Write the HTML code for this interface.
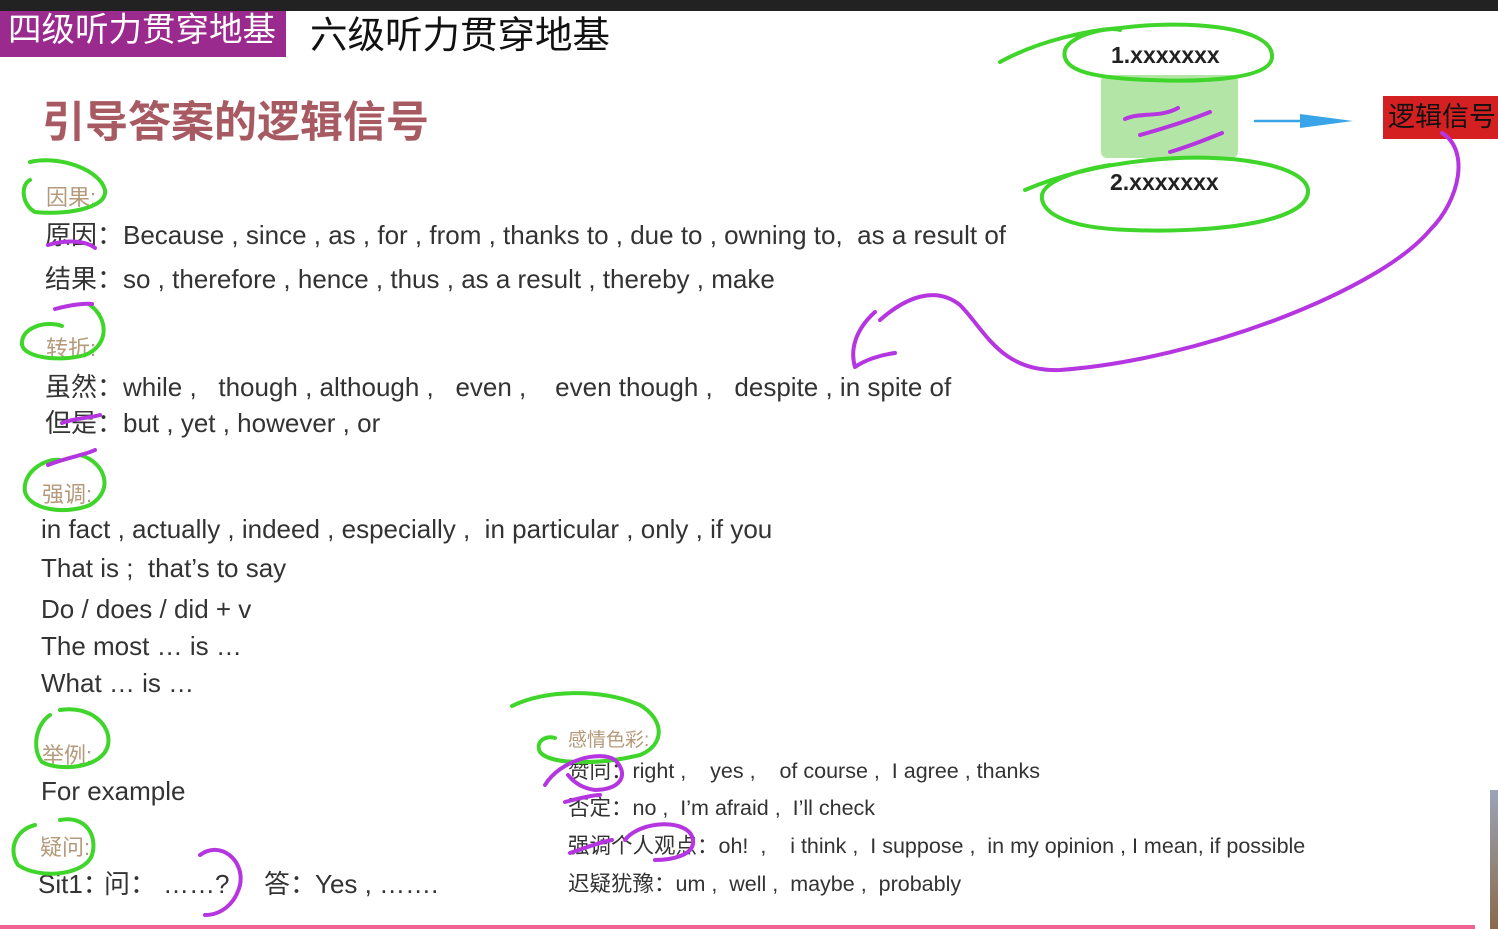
<!DOCTYPE html>
<html><head><meta charset="utf-8"><style>
html,body{margin:0;padding:0;}
body{width:1498px;height:929px;background:#fff;position:relative;overflow:hidden;font-family:"Liberation Sans","Noto Sans CJK SC",sans-serif;color:#333;}
.a{position:absolute;white-space:pre;line-height:1;}
.t{font-size:26px;}
.s{font-size:21.5px;}
.lab{color:#b49a7a;font-size:22px;}
</style></head><body>
<div style="position:absolute;left:0;top:0;width:1498px;height:11px;background:#222;"></div>
<div style="position:absolute;left:0;top:11px;width:286px;height:46px;background:#9a2a8e;"></div>
<div class="a" style="left:8px;top:14px;font-size:33.5px;color:#fff;">四级听力贯穿地基</div>
<div class="a" style="left:310px;top:17px;font-size:37.5px;color:#111;">六级听力贯穿地基</div>
<div class="a" style="left:42px;top:102px;font-size:43px;color:#a85a62;font-weight:bold;">引导答案的逻辑信号</div>

<div style="position:absolute;left:1101px;top:75px;width:137px;height:83px;background:#b3e6a6;border-radius:6px;"></div>
<div class="a" style="left:1111px;top:44px;font-size:23px;font-weight:bold;color:#222;">1.xxxxxxx</div>
<div class="a" style="left:1110px;top:171px;font-size:23px;font-weight:bold;color:#222;">2.xxxxxxx</div>
<div style="position:absolute;left:1383px;top:96px;width:115px;height:43px;background:#d42020;"></div>
<div class="a" style="left:1388px;top:104px;font-size:27px;color:#111;">逻辑信号</div>

<div class="a lab" style="left:46px;top:187px;">因果:</div>
<div class="a t" style="left:45px;top:222px;">原因：Because , since , as , for , from , thanks to , due to , owning to,  as a result of</div>
<div class="a t" style="left:45px;top:266px;">结果：so , therefore , hence , thus , as a result , thereby , make</div>
<div class="a lab" style="left:46px;top:338px;">转折:</div>
<div class="a t" style="left:45px;top:374px;">虽然：while ,   though , although ,   even ,    even though ,   despite , in spite of</div>
<div class="a t" style="left:45px;top:410px;">但是：but , yet , however , or</div>
<div class="a lab" style="left:42px;top:484px;">强调:</div>
<div class="a t" style="left:41px;top:516px;">in fact , actually , indeed , especially ,  in particular , only , if you</div>
<div class="a t" style="left:41px;top:555px;">That is ;  that’s to say</div>
<div class="a t" style="left:41px;top:596px;">Do / does / did + v</div>
<div class="a t" style="left:41px;top:633px;">The most … is …</div>
<div class="a t" style="left:41px;top:670px;">What … is …</div>
<div class="a lab" style="left:42px;top:745px;">举例:</div>
<div class="a t" style="left:41px;top:778px;">For example</div>
<div class="a lab" style="left:40px;top:837px;">疑问:</div>
<div class="a t" style="left:38px;top:871px;">Sit1：</div>
<div class="a t" style="left:104px;top:871px;">问：</div>
<div class="a t" style="left:163px;top:871px;">……?</div>
<div class="a t" style="left:264px;top:871px;">答：</div>
<div class="a t" style="left:315px;top:871px;">Yes , …….</div>

<div class="a lab" style="left:568px;top:731px;font-size:19px;">感情色彩:</div>
<div class="a s" style="left:568px;top:761px;">赞同：right ,    yes ,    of course ,  I agree , thanks</div>
<div class="a s" style="left:568px;top:798px;">否定：no ,  I’m afraid ,  I’ll check</div>
<div class="a s" style="left:568px;top:836px;">强调个人观点：oh!  ,    i think ,  I suppose ,  in my opinion , I mean, if possible</div>
<div class="a s" style="left:568px;top:874px;">迟疑犹豫：um ,  well ,  maybe ,  probably</div>

<div style="position:absolute;left:0;top:925px;width:1475px;height:4px;background:#f06292;"></div>
<div style="position:absolute;left:1490px;top:790px;width:8px;height:139px;background:linear-gradient(#9aa4b8,#8a6a4a);"></div>

<svg width="1498" height="929" style="position:absolute;left:0;top:0" fill="none" stroke-linecap="round" stroke-linejoin="round">
<g stroke="#3fd52a" stroke-width="4">
<path d="M1000 62 C1040 40 1090 30 1120 28 C1180 20 1270 25 1272 55 C1275 80 1200 82 1150 80 C1090 78 1060 70 1065 50 C1070 35 1110 26 1120 30"/>
<path d="M1025 190 C1060 175 1100 165 1150 160 C1230 152 1305 165 1308 190 C1310 225 1200 233 1130 230 C1060 228 1040 210 1042 195 C1045 180 1080 170 1110 165"/>
<path d="M30 162 C60 155 100 170 105 190 C108 210 60 215 35 212 C22 205 20 185 30 180"/>
<path d="M90 305 C108 318 110 345 85 355 C60 362 25 358 22 345 C20 328 45 320 62 326"/>
<path d="M80 455 C105 462 115 490 90 505 C65 515 30 510 25 492 C22 472 45 458 60 460"/>
<path d="M60 710 C90 705 112 725 108 745 C103 768 60 772 42 762 C32 750 35 725 50 715"/>
<path d="M60 820 C85 815 98 835 92 855 C85 875 40 880 18 865 C8 850 15 830 35 825"/>
<path d="M512 706 C545 690 600 688 640 705 C665 720 665 745 640 755 C600 765 550 765 540 752 C535 742 545 735 555 738"/>
</g>
<g stroke="#b535e0" stroke-width="4">
<path d="M1125 119 C1140 112 1160 118 1178 108"/>
<path d="M1140 135 C1165 128 1190 120 1210 112"/>
<path d="M1170 152 C1190 146 1205 140 1222 133"/>
<path d="M1442 133 C1470 150 1460 200 1430 230 C1380 290 1200 360 1060 370 C1000 372 985 330 960 305 C935 285 905 298 880 320"/>
<path d="M875 312 C855 330 850 350 855 367 C865 360 880 355 895 353"/>
<path d="M48 245 C65 240 85 240 95 248"/>
<path d="M55 309 C70 305 85 303 92 304"/>
<path d="M62 423 C75 418 90 418 100 415"/>
<path d="M48 465 C65 458 85 455 95 450"/>
<path d="M200 855 C220 840 245 860 240 885 C235 905 220 915 205 915"/>
<path d="M545 785 C560 760 600 750 615 760 C630 775 620 790 595 790 C580 788 572 780 568 775"/>
<path d="M565 802 C580 798 592 795 600 795"/>
<path d="M570 853 C585 848 600 842 612 840"/>
<path d="M625 840 C640 820 690 818 693 840 C695 856 670 860 655 860"/>
</g>
<path d="M1255 121 L1340 121" stroke="#3aa4e8" stroke-width="2.5"/>
<path d="M1300 114 L1353 121 L1300 128 Z" fill="#3aa4e8"/>
</svg>
</body></html>
